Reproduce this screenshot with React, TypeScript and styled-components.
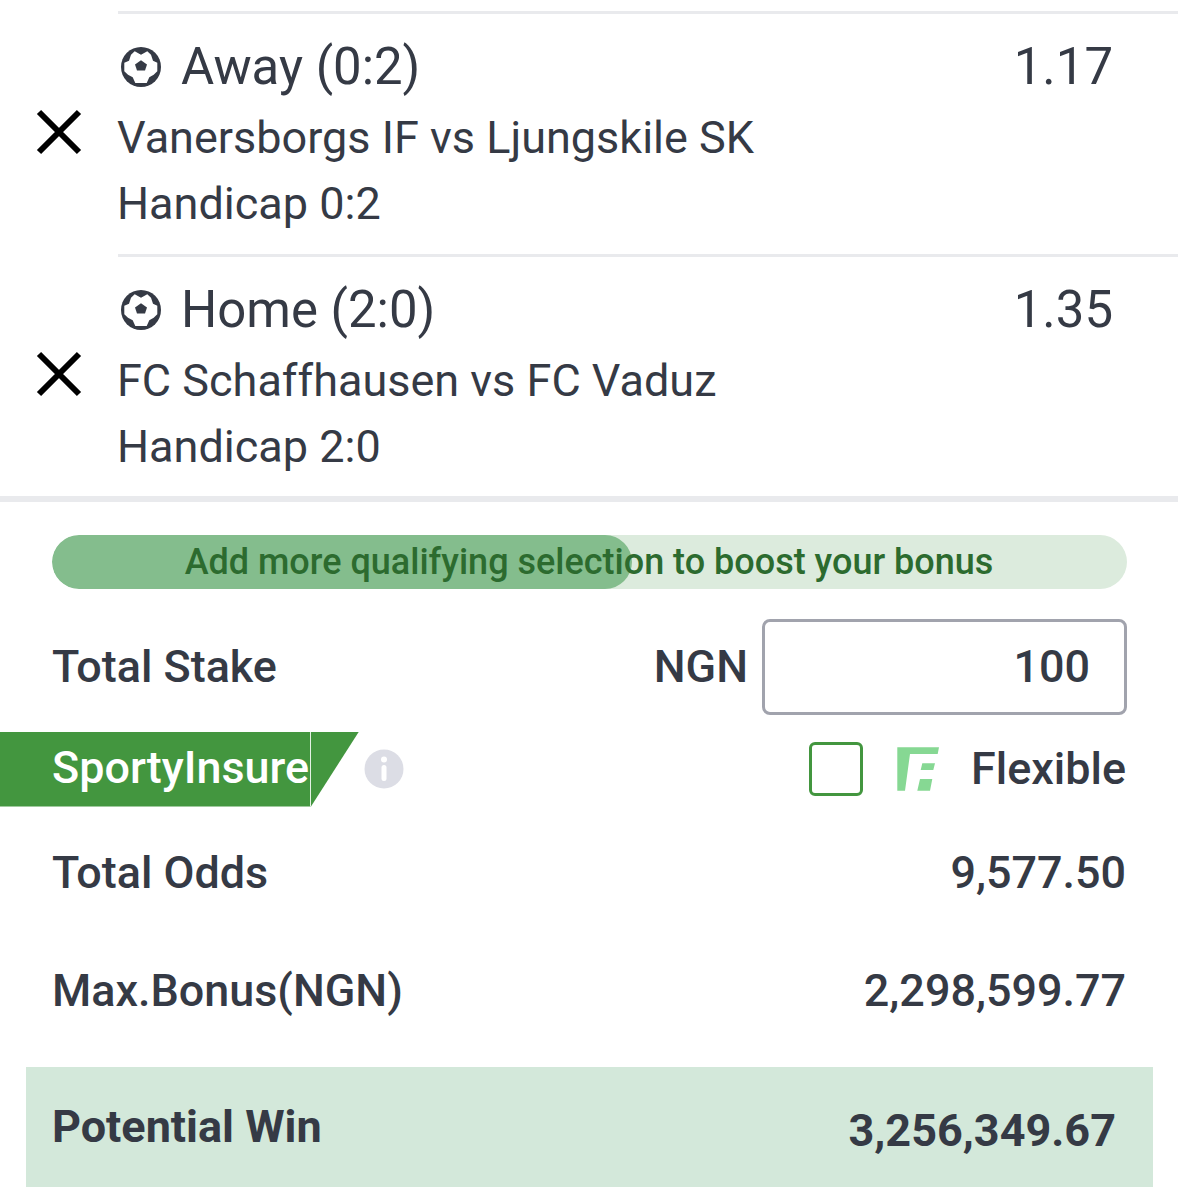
import React from "react";
import styled, { createGlobalStyle } from "styled-components";

const Global = createGlobalStyle`
  html, body { margin: 0; padding: 0; background: #fff; }
  body { font-family: Roboto, "Liberation Sans", sans-serif; color: #353a45; overflow: hidden; }
`;

const Page = styled.div`
  width: 1178px;
  height: 1187px;
  overflow: hidden;
  padding-top: 11px;
  box-sizing: border-box;
`;

const Selection = styled.section<{ $height: number }>`
  display: grid;
  grid-template-columns: 118px 1fr;
  height: ${(p) => p.$height}px;
`;

const RemoveCell = styled.div`
  display: flex;
  align-items: center;
  justify-content: center;
  padding: 0 0 2px 0;
`;

const SelectionBody = styled.div`
  border-top: 3px solid #e9eaed;
  padding: 23px 65px 0 0;
  display: flex;
  flex-direction: column;
`;

const PickRow = styled.div`
  display: flex;
  align-items: center;
  height: 60px;
`;

const BallIcon = styled.svg`
  width: 40px;
  height: 40px;
  margin: 0 20px 0 3px;
  flex: none;
`;

const PickName = styled.span`
  font-size: 50.9px;
  line-height: 60px;
  flex: 1;
`;

const PickOdds = styled.span`
  font-size: 50.9px;
  line-height: 60px;
`;

const DetailLine = styled.div<{ $top: number }>`
  font-size: 45px;
  line-height: 52px;
  margin: ${(p) => p.$top}px 0 0 -1px;
`;

const ThickRule = styled.div`
  height: 6px;
  background: #e9eaed;
  margin-top: 1px;
`;

const BonusBar = styled.div`
  position: relative;
  margin: 33px 51px 0 52px;
  height: 54px;
  border-radius: 27px;
  background: #dcebdd;
  overflow: hidden;
  display: flex;
  align-items: center;
  justify-content: center;
`;

const BonusFill = styled.div`
  position: absolute;
  inset: 0 auto 0 0;
  border-radius: 27px;
  background: #84bd8d;
`;

const BonusText = styled.span`
  position: relative;
  font-size: 36px;
  font-weight: 500;
  color: #2c6b2f;
  line-height: 54px;
  margin-left: -1px;
`;

const Row = styled.div<{ $height: number; $top?: number; $right?: number }>`
  display: flex;
  align-items: center;
  justify-content: space-between;
  height: ${(p) => p.$height}px;
  margin-top: ${(p) => p.$top ?? 0}px;
  padding: 0 ${(p) => p.$right ?? 52}px 0 52px;
  font-size: 44.9px;
  font-weight: 500;
`;

const RowText = styled.span`
  margin-bottom: 2px;
`;

const StakeGroup = styled.div`
  display: flex;
  align-items: center;
  gap: 14px;
`;

const StakeInput = styled.div`
  width: 365px;
  height: 96px;
  box-sizing: border-box;
  border: 3px solid #a1a3ad;
  border-radius: 8px;
  display: flex;
  align-items: center;
  justify-content: flex-end;
  padding: 0 34px 2px 0;
`;

const InsureRow = styled.div`
  display: flex;
  align-items: center;
  height: 76px;
  margin-top: 16px;
  padding-right: 52px;
  font-size: 44.9px;
  font-weight: 500;
`;

const InsureFlag = styled.div`
  position: relative;
  width: 359px;
  height: 75px;
  box-sizing: border-box;
  padding-left: 52px;
  background: #43963f;
  clip-path: polygon(0 0, 100% 0, 311px 100%, 0 100%);
  color: #fff;
  line-height: 71px;
  flex: none;
`;

const FlagSeam = styled.span`
  position: absolute;
  top: 0;
  bottom: 0;
  left: 310px;
  width: 1px;
  background: #e4f1e3;
`;

const InfoIcon = styled.svg`
  width: 40px;
  height: 40px;
  margin-left: 5px;
  flex: none;
`;

const FlexibleGroup = styled.div`
  margin-left: auto;
  display: flex;
  align-items: center;
`;

const Checkbox = styled.span`
  width: 54px;
  height: 54px;
  box-sizing: border-box;
  border: 3px solid #43963f;
  border-radius: 6px;
  margin-right: 34px;
`;

const FlexLogo = styled.svg`
  width: 42px;
  height: 44px;
  margin-right: 32px;
`;

const WinRow = styled.div`
  display: flex;
  justify-content: space-between;
  margin: 0 25px 0 26px;
  height: 120px;
  margin-top: 17px;
  padding: 0 37px 0 26px;
  background: #d3e8da;
  font-size: 45px;
  font-weight: 700;
`;

const WinLabel = styled.span`
  line-height: 120px;
`;

const WinValue = styled.span`
  line-height: 128px;
`;

const Ball = () => (
  <BallIcon viewBox="0 0 40 40">
    <circle cx="20" cy="20" r="20" fill="#353a45" />
    <path
      fill="#fff"
      d="M13.700 4.300L20 7.700l6.300-3.400L30 7.700l2 6 4.300 2v8.600l-3.600 3.400-4.400 2.600-2.600 5.700H14.300l-2.600-5.700-4.700-2.600-3.700-3.400v-8.600l4.700-2 2-6z"
    />
    <path fill="#353a45" d="M20 13.300l6 4.200-2 6h-8l-2-6z" />
  </BallIcon>
);

const CloseX = () => (
  <svg width="46" height="46" viewBox="0 0 46 46">
    <path d="M3 3l40 40M43 3L3 43" stroke="#000" strokeWidth="6" fill="none" />
  </svg>
);

const picks = [
  { name: "Away (0:2)", odds: "1.17", match: "Vanersborgs IF vs Ljungskile SK", market: "Handicap 0:2", height: 243 },
  { name: "Home (2:0)", odds: "1.35", match: "FC Schaffhausen vs FC Vaduz", market: "Handicap 2:0", height: 241 },
];

export default function App() {
  return (
    <Page>
      <Global />
      {picks.map((p) => (
        <Selection key={p.name} $height={p.height}>
          <RemoveCell>
            <CloseX />
          </RemoveCell>
          <SelectionBody>
            <PickRow>
              <Ball />
              <PickName>{p.name}</PickName>
              <PickOdds>{p.odds}</PickOdds>
            </PickRow>
            <DetailLine $top={15}>{p.match}</DetailLine>
            <DetailLine $top={14}>{p.market}</DetailLine>
          </SelectionBody>
        </Selection>
      ))}
      <ThickRule />
      <BonusBar>
        <BonusFill style={{ width: `${(580 / 1075) * 100}%` }} />
        <BonusText>Add more qualifying selection to boost your bonus</BonusText>
      </BonusBar>
      <Row $height={96} $top={30} $right={51}>
        <RowText>Total Stake</RowText>
        <StakeGroup>
          <RowText>NGN</RowText>
          <StakeInput>100</StakeInput>
        </StakeGroup>
      </Row>
      <InsureRow>
        <InsureFlag>
          SportyInsure
          <FlagSeam />
        </InsureFlag>
        <InfoIcon viewBox="0 0 40 40">
          <circle cx="20" cy="20" r="19.500" fill="#dcdde5" />
          <circle cx="20" cy="10.500" r="3" fill="#fff" />
          <rect x="17.500" y="16" width="5" height="16" rx="2.500" fill="#fff" />
        </InfoIcon>
        <FlexibleGroup>
          <Checkbox />
          <FlexLogo viewBox="0 0 42 44">
            <path
              fill="#86d893"
              d="M.3.300H42L40.700 7H13L8 43.700H.3zM25.300 16.300H38L36.300 23H23.700zM23 32h12.300L33 43.700H20.300z"
            />
          </FlexLogo>
          <RowText>Flexible</RowText>
        </FlexibleGroup>
      </InsureRow>
      <Row $height={118} $top={7}>
        <RowText>Total Odds</RowText>
        <RowText>9,577.50</RowText>
      </Row>
      <Row $height={118}>
        <RowText>Max.Bonus(NGN)</RowText>
        <RowText>2,298,599.77</RowText>
      </Row>
      <WinRow>
        <WinLabel>Potential Win</WinLabel>
        <WinValue>3,256,349.67</WinValue>
      </WinRow>
    </Page>
  );
}
